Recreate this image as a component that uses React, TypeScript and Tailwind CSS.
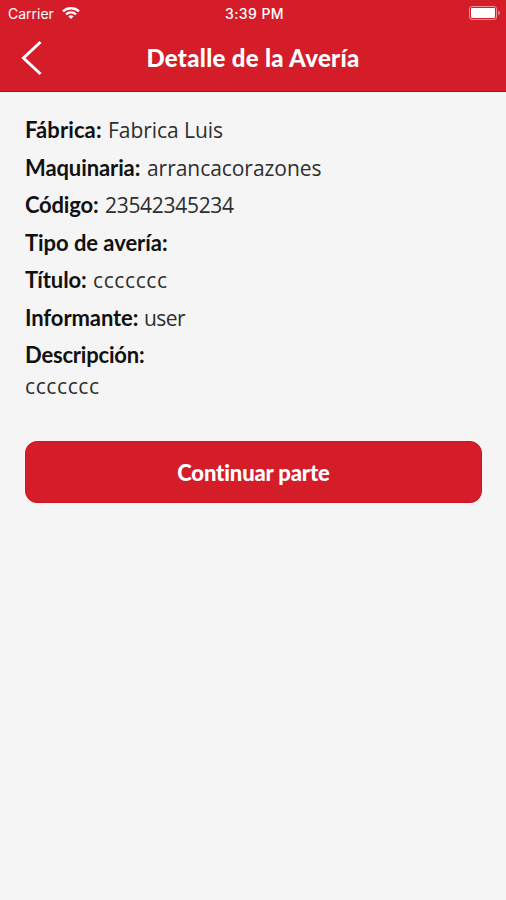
const fields = [
  { label: 'Fábrica:', value: 'Fabrica Luis', labelStyle: 'w-[77px] tracking-[0.1px]', valueStyle: 'tracking-[-0.05px]' },
  { label: 'Maquinaria:', value: 'arrancacorazones', labelStyle: 'w-[116px] tracking-[-0.1px]', valueStyle: 'tracking-[-0.05px]' },
  { label: 'Código:', value: '23542345234', labelStyle: 'w-[74px] tracking-[-0.2px]', valueStyle: 'tracking-[-0.3px]' },
  { label: 'Tipo de avería:', value: '', labelStyle: 'tracking-[-0.05px]', valueStyle: '' },
  { label: 'Título:', value: 'ccccccc', labelStyle: 'w-[62px] tracking-[-0.1px]', valueStyle: 'tracking-[0.6px]' },
  { label: 'Informante:', value: 'user', labelStyle: 'w-[113px] tracking-[-0.1px]', valueStyle: 'tracking-[-0.6px]' },
  { label: 'Descripción:', value: '', labelStyle: 'tracking-[-0.2px]', valueStyle: '' },
]

function WifiIcon() {
  return (
    <svg className="h-[12px] w-[18px]" viewBox="0 0 18 12" fill="none" stroke="currentColor" strokeWidth="2.3">
      <path d="M1 4.3C5.4.2 12.6.2 17 4.3" />
      <path d="M4 7.3c2.8-2.5 7.2-2.5 10 0" />
      <path d="M6.3 9.2c1.5-1.3 3.9-1.3 5.4 0L9 12Z" fill="currentColor" stroke="none" />
    </svg>
  )
}

function BatteryIcon() {
  return (
    <svg className="h-[14px] w-[32px]" viewBox="0 0 32 14" fill="none">
      <rect x="0.5" y="0.5" width="27" height="13" rx="2.5" stroke="#ef8f94" />
      <rect x="2" y="2" width="24" height="10" rx="1" fill="white" />
      <path d="M29.3 4.5v5c1.8-.7 1.8-4.3 0-5Z" fill="#f5a3a6" />
    </svg>
  )
}

export default function App() {
  return (
    <main className="min-h-[900px] bg-[#f5f5f5] font-['Lato',sans-serif] text-[#111] [font-variant-ligatures:none]">
      <header className="h-[92px] border-b border-[#c9000c] bg-[#d51d29] text-white">
        <div className="grid h-[26px] grid-cols-3 items-center pr-[5px] pl-2 font-['Inter',sans-serif] text-[14px]">
          <div className="flex items-center gap-[7px]">
            <span className="w-[47px]">Carrier</span>
            <WifiIcon />
          </div>
          <span className="text-center font-medium tracking-[0.4px] whitespace-nowrap">3:39 PM</span>
          <div className="flex justify-end">
            <BatteryIcon />
          </div>
        </div>
        <div className="grid h-[63px] grid-cols-[60px_1fr_60px] items-center">
          <button aria-label="Volver" className="pl-[21px]">
            <svg className="h-[36px] w-[22px]" viewBox="0 0 22 36" fill="none" stroke="currentColor" strokeWidth="3">
              <path d="M19.5 2 2.5 18l17 16" />
            </svg>
          </button>
          <h1 className="text-center text-[24px] font-black tracking-[0.3px] whitespace-nowrap">Detalle de la Avería</h1>
        </div>
      </header>
      <section className="px-[25px] pt-[19px]">
        {fields.map((field) => (
          <div key={field.label} className="flex h-[37.5px] items-baseline gap-[6px] text-[22px] leading-[37px] whitespace-nowrap">
            <strong className={field.labelStyle}>{field.label}</strong>
            <span className={`font-['Open_Sans',sans-serif] text-[21px] text-[#2e2e2e] ${field.valueStyle}`}>{field.value}</span>
          </div>
        ))}
        <p className="h-[32px] font-['Open_Sans',sans-serif] text-[21px] leading-[24px] tracking-[0.6px] text-[#2e2e2e]">ccccccc</p>
        <button className="mt-[35px] h-[62px] w-[457px] rounded-[12px] border border-[#d01420] bg-[#d51d29] pt-px text-[22px] font-black tracking-[-0.15px] text-white">
          Continuar parte
        </button>
      </section>
    </main>
  )
}
